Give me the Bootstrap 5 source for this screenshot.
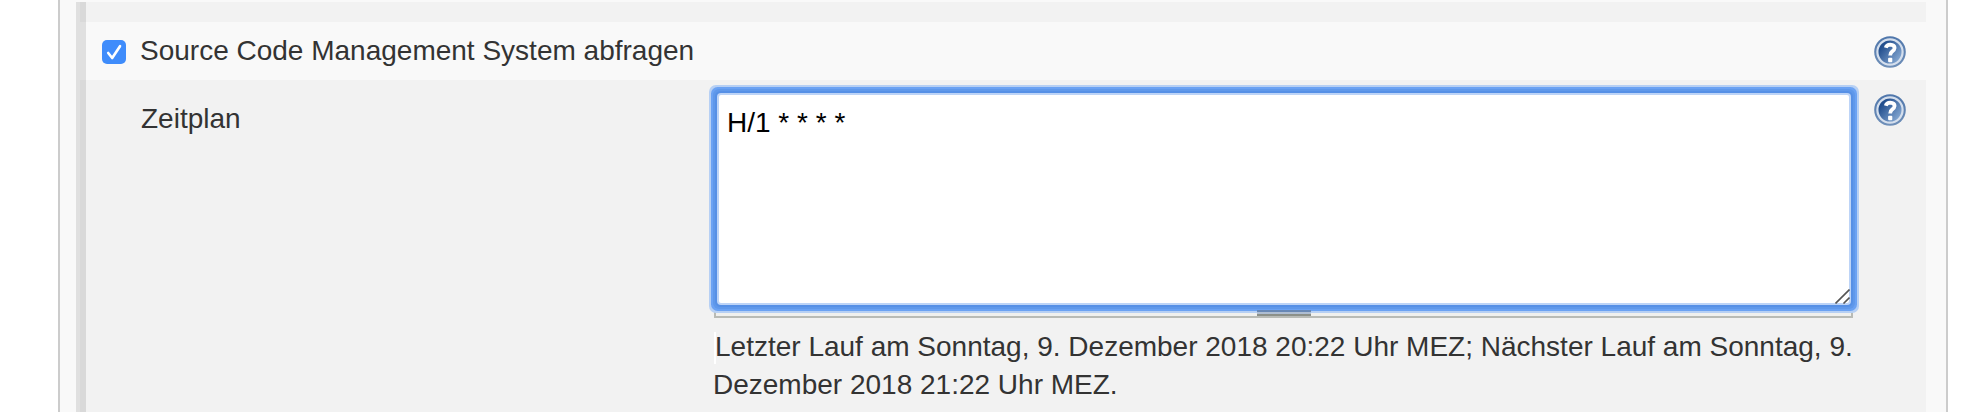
<!DOCTYPE html>
<html lang="de">
<head>
<meta charset="utf-8">
<meta name="viewport" content="width=device-width, initial-scale=1">
<title>Source Code Management System abfragen</title>
<link href="https://cdn.jsdelivr.net/npm/bootstrap@5.3.0/dist/css/bootstrap.min.css" rel="stylesheet">
<style>
body{font-family:"Liberation Sans",Arial,sans-serif;font-size:28px;line-height:38px;color:#333;background:#fff;height:412px}
.panel{width:1890px;height:412px;margin-left:58px;background:#f9f9f9;border:solid #ccc;border-width:0 2px;padding:2px 20px 0 16px}
.section{border-left:10px solid #e0e0e0}
.shade{background:#f2f2f2;box-shadow:-6px 0 #d9d9d9}
.gap-row{height:20px}
.check-row{height:58px;padding:0 20px 0 16px}
.form-check-input.scm{width:24px;height:24px;margin:2px 0 0;border:0;border-radius:5px;background-color:#3f8cfb;background-size:100% 100%;background-image:url("data:image/svg+xml,%3Csvg xmlns='http://www.w3.org/2000/svg' viewBox='0 0 24 24'%3E%3Cpath d='M6.2 13l4 5L18 6.2' fill='none' stroke='white' stroke-width='2.6' stroke-linecap='round' stroke-linejoin='round'/%3E%3C/svg%3E")}
.check-label{margin-left:14px}
.plan-row{height:332px;padding:0 20px 0 55px}
.plan-label{width:573px;padding-top:20px}
.field{width:1139px;padding-top:15px}
.area{width:1130px;height:208px;margin-left:5px;padding:9px 8px;border:0;border-radius:2px;background:#fff;color:#000;font-size:28px;line-height:38px;resize:none;outline:0;overflow:hidden;position:relative;z-index:1;
box-shadow:0 0 0 2px #bdd4f7,0 0 0 4px #5690e6,0 0 0 6px #5f98ea,0 0 0 8px #6ba2f3,0 0 0 10px #b7d0f4}
.grip{right:3px;bottom:-1px;z-index:2}
.tray{height:15px;border:2px solid #b9bbb6;border-top:0;background:#f0f0ee}
.handle{left:541px;top:7px;width:54px;height:6px;z-index:2;background:linear-gradient(#6787b5 0 2px,#aebdd2 2px 4px,#8c9089 4px)}
.status{margin:10px -20px 0 0}
.status-mark{left:0;top:4px;width:2px;height:32px;background:#fff}
.status span{white-space:nowrap}
.line-one{padding-left:1px}
.line-two{margin-left:-1px}
.help{width:32px;height:32px}
.help-top{margin-top:2px}
.help-plan{margin-top:14px}
</style>
</head>
<body class="overflow-hidden">
<svg class="position-absolute" width="0" height="0" aria-hidden="true">
<linearGradient id="blue" x1="0" y1="0.1" x2="1" y2="0.9"><stop offset=".2" stop-color="#234f8e"/><stop offset=".9" stop-color="#86a9d3"/></linearGradient>
<linearGradient id="rim" x1="0" y1="0" x2="0" y2="1"><stop stop-color="#4f76ab"/><stop offset="1" stop-color="#7090b9"/></linearGradient>
<symbol id="help" viewBox="0 0 32 32"><circle cx="16" cy="16" r="15.8" fill="url(#rim)"/><circle cx="16" cy="16" r="12.6" fill="url(#blue)" stroke="#d5dfed" stroke-width="2.2"/><path d="M11.8 11.8Q12.6 8.6 16.2 8.6 20.6 8.7 20.6 12 20.5 14 18 15.6 16.2 16.8 16.2 19.6" fill="none" stroke="#fff" stroke-width="3.8"/><rect x="14.1" y="21.8" width="4.2" height="4.4" rx="1" fill="#fff"/></symbol>
</svg>
<main class="panel">
<div class="section">
  <div class="shade gap-row"></div>
  <div class="check-row d-flex align-items-center">
    <input class="form-check-input scm flex-shrink-0" type="checkbox" id="scm" checked>
    <label class="check-label" for="scm">Source Code Management System abfragen</label>
    <svg class="help help-top ms-auto"><use href="#help"/></svg>
  </div>
  <div class="shade plan-row d-flex align-items-start">
    <label class="plan-label flex-shrink-0" for="plan">Zeitplan</label>
    <div class="field flex-shrink-0">
      <div class="position-relative">
        <textarea class="area d-block" id="plan" spellcheck="false">H/1 * * * *</textarea>
        <svg class="grip position-absolute" width="15" height="15" viewBox="0 0 15 15"><path d="M.5 14.5L14.5.5M8.5 14.5l6-6" stroke="#555" stroke-width="1.6" fill="none"/></svg>
      </div>
      <div class="tray position-relative"><div class="handle position-absolute"></div></div>
      <div class="status position-relative"><div class="status-mark position-absolute"></div><span class="d-block line-one">Letzter Lauf am Sonntag, 9. Dezember 2018 20:22 Uhr MEZ; Nächster Lauf am Sonntag, 9.</span><span class="d-block line-two">Dezember 2018 21:22 Uhr MEZ.</span></div>
    </div>
    <svg class="help help-plan ms-auto"><use href="#help"/></svg>
  </div>
</div>
</main>
<script src="https://cdn.jsdelivr.net/npm/bootstrap@5.3.0/dist/js/bootstrap.bundle.min.js"></script>
</body>
</html>
